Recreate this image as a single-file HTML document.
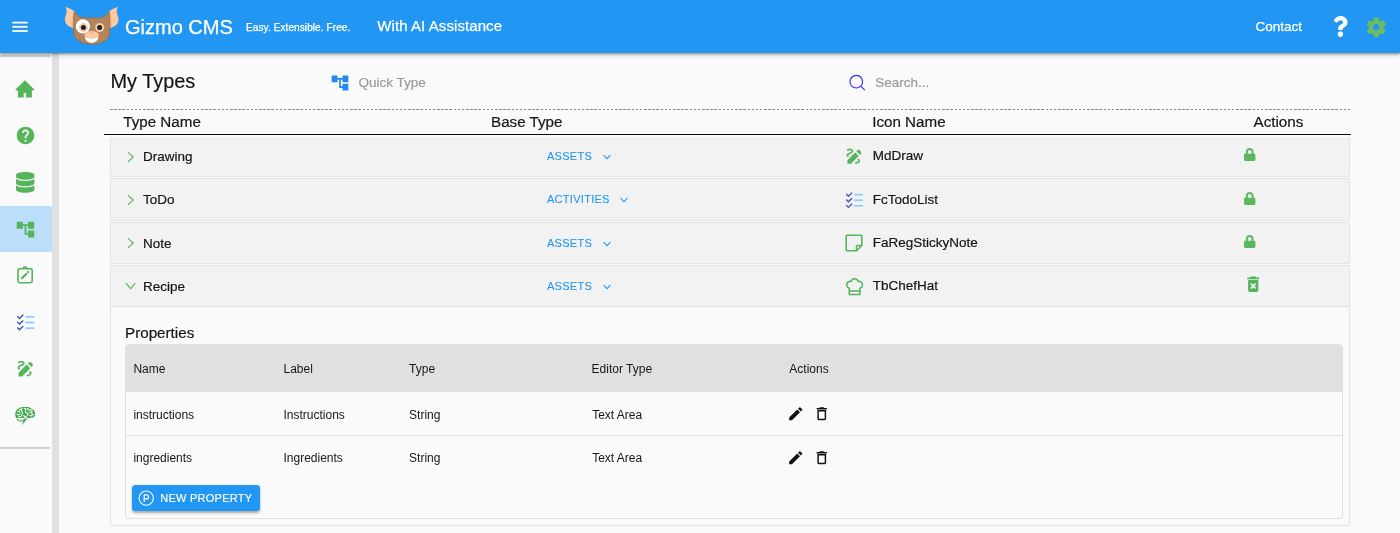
<!DOCTYPE html>
<html>
<head>
<meta charset="utf-8">
<title>Gizmo CMS</title>
<style>
*{box-sizing:border-box;margin:0;padding:0}
html,body{width:1400px;height:533px;overflow:hidden;background:#fafafa;font-family:"Liberation Sans",sans-serif;color:#161616}
#wrap{position:absolute;left:0;top:0;width:1400px;height:533px;overflow:hidden;will-change:transform}
.abs{position:absolute}
svg{position:absolute;overflow:visible}
.t{position:absolute;white-space:nowrap;line-height:1;-webkit-text-stroke:0.2px currentColor}
.w{-webkit-text-stroke:0.25px currentColor}
#hdr{position:absolute;left:0;top:0;width:1400px;height:53.1px;background:#2196f3;box-shadow:0 1px 2px rgba(0,0,0,.32),0 2px 5px rgba(0,0,0,.22);z-index:5}
#hdr .t{color:#fff;-webkit-text-stroke:0.25px #fff}
#side{position:absolute;left:0;top:52px;width:52px;height:481px;background:#fafafa}
#strip{position:absolute;left:52px;top:52px;width:7px;height:481px;background:#e0e0e0}
.row{position:absolute;left:110.1px;width:1239.9px;height:42.25px;background:#f2f2f2;border:1.4px solid #e3e3e3;border-radius:1.2px}
</style>
</head>
<body>
<div id="wrap">

<div id="side">
<div class="abs" style="left:0;top:3.2px;width:50px;height:2px;background:#d4d4d4"></div>
<div class="abs" style="left:0;top:153.7px;width:52px;height:46.2px;background:#bbdefb;border-radius:0 2.5px 2.5px 0"></div>
<div class="abs" style="left:0;top:394.9px;width:50px;height:2.6px;background:linear-gradient(#c9c9c9,#dcdcdc)"></div>
</div><div id="strip"></div>
<svg style="left:0;top:0" width="60" height="533" viewBox="0 0 60 533"><path fill="#56b45a" d="M24.9 80.3 L34.3 89.5 Q34.5 90.5 33.6 90.5 L31.9 90.5 L31.9 97.4 L26.1 97.4 L26.1 93 L23.7 93 L23.7 97.4 L17.9 97.4 L17.9 90.5 L16.2 90.5 Q15.3 90.5 15.5 89.5 Z"/></svg>
<svg style="left:14.6px;top:125.3px" width="21" height="21" viewBox="0 0 24 24"><path fill="#56b45a" d="M12 2C6.48 2 2 6.48 2 12s4.48 10 10 10 10-4.48 10-10S17.52 2 12 2zm1 17h-2v-2h2v2zm2.07-7.75l-.9.92C13.45 12.9 13 13.5 13 15h-2v-.5c0-1.1.45-2.1 1.17-2.83l1.24-1.26c.37-.36.59-.86.59-1.41 0-1.1-.9-2-2-2s-2 .9-2 2H8c0-2.21 1.79-4 4-4s4 1.79 4 4c0 .88-.36 1.68-.93 2.250z"/></svg>
<svg style="left:15.8px;top:171.9px" width="18.4" height="20.7" viewBox="0 0 448 512" preserveAspectRatio="none"><path fill="#56b45a" d="M448 73.143v45.714C448 159.143 347.667 192 224 192S0 159.143 0 118.857V73.143C0 32.857 100.333 0 224 0s224 32.857 224 73.143zM448 176v102.857C448 319.143 347.667 352 224 352S0 319.143 0 278.857V176c48.125 33.143 136.208 48.572 224 48.572S399.874 209.143 448 176zm0 160v102.857C448 479.143 347.667 512 224 512S0 479.143 0 438.857V336c48.125 33.143 136.208 48.572 224 48.572S399.874 369.143 448 336z"/></svg>
<svg style="left:14.55px;top:218.5px" width="21" height="21" viewBox="0 0 24 24"><path fill="#56b45a" d="M22 11V3h-7v3H9V3H2v8h7V8h2v10h4v3h7v-8h-7v3h-2V8h2v3z"/></svg>
<svg style="left:0;top:0" width="60" height="533" viewBox="0 0 60 533"><g fill="none" stroke="#56b45a" stroke-width="1.6" stroke-linejoin="round">
<rect x="18" y="268.7" width="14.2" height="14" rx="1.6"/>
<path d="M23.3 268.5 a1.8 1.8 0 0 1 3.6 0"/></g>
<path fill="#56b45a" d="M20.9 279.3 l0.3 -1.9 l4.9 -4.9 l1.6 1.6 l-4.9 4.9 z M26.7 271.9 l0.9 -0.9 q0.4 -0.3 0.8 0 l0.8 0.8 q0.3 0.4 0 0.8 l-0.9 0.9 z"/></svg>
<svg style="left:14.75px;top:311.5px" width="21" height="21" viewBox="0 0 48 48"><g fill="#3F51B5"><polygon points="17.8,18.1 10.4,25.4 6.2,21.3 4,23.5 10.4,29.9 20,20.3"/><polygon points="17.8,5.1 10.4,12.4 6.2,8.3 4,10.5 10.4,16.9 20,7.3"/><polygon points="17.8,31.1 10.4,38.4 6.2,34.3 4,36.5 10.4,42.9 20,33.3"/></g><g fill="#90CAF9"><rect x="24" y="22" width="20" height="4"/><rect x="24" y="9" width="20" height="4"/><rect x="24" y="35" width="20" height="4"/></g></svg>
<svg style="left:14.6px;top:357.8px" width="21" height="21" viewBox="0 0 24 24"><path fill="#56b45a" d="M18.85 10.39l1.06-1.06c.78-.78.78-2.05 0-2.83L18.5 5.09c-.78-.78-2.05-.78-2.83 0l-1.06 1.06 4.24 4.24zm-5.66-2.83L4 16.76V21h4.24l9.19-9.19-4.24-4.25zM19 17.5c0 2.19-2.54 3.5-5 3.5-.55 0-1-.45-1-1s.45-1 1-1c1.54 0 3-.73 3-1.5 0-.47-.48-.87-1.23-1.2l1.48-1.48c1.07.63 1.75 1.47 1.75 2.680zM4.58 13.35C3.61 12.79 3 12.06 3 11c0-1.8 1.89-2.63 3.56-3.36C7.59 7.18 9 6.560 9 6c0-.41-.78-1-2-1-1.260 0-1.800.61-1.830.64-.35.41-.98.46-1.400.12-.41-.34-.49-.95-.15-1.380C3.730 4.240 4.760 3 7 3s4 1.320 4 3c0 1.870-1.930 2.720-3.640 3.470C6.420 9.880 5 10.500 5 11c0 .31.430.6 1.070.86l-1.490 1.490z"/></svg>
<svg style="left:0;top:0" width="60" height="533" viewBox="0 0 60 533">
<path fill="#3fa649" d="M15.300 414.800 C15 411.500 16.800 409.300 18.600 408.500 C20.300 407.200 22.500 406.800 24.600 406.900 C27 406.600 29.600 407.400 31.400 408.700 C33.600 409.700 35.200 411.600 35.100 413.800 C35.200 415.600 34.600 416.800 33.400 417.300 C31.500 418.300 29.300 417.600 27.300 418.300 C25.800 420.500 23.800 423.300 22 425.300 C22.200 423.800 22.900 422.200 23.400 420.900 C21.600 421.700 19.600 421.700 18.200 421 C17.200 420.500 16.700 419.700 16.900 418.900 C15.900 418 15.300 416.500 15.300 414.800 Z"/>
<g fill="none" stroke="#fafafa" stroke-width="1.2" stroke-linecap="round" opacity="0.95">
<path d="M17.700 411.800 c0.800 -0.700 1.700 -0.600 2.200 0.200"/>
<path d="M22.200 408.400 c-1 1 -1.100 2.300 -0.300 3.200 c0.900 1 0.800 2.100 0 2.800"/>
<path d="M19.300 409.700 c0.800 -0.500 1.500 -0.400 1.900 0.200"/>
<path d="M24.400 408.300 c1.200 0.200 1.700 1.100 1.300 2.200 c-0.500 1.400 0.200 2.400 1.300 2.600 c1 0.200 1.300 1.300 0.700 2.200"/>
<path d="M27.200 408.600 c1.200 0.300 1.800 1 1.700 2"/>
<path d="M30 409.700 c1.300 0.300 2.100 1.100 2.200 2.200"/>
<path d="M29.600 412.600 c0.900 -0.500 1.900 -0.200 2.200 0.700 c0.300 1 1 1.600 1.800 1.400"/>
<path d="M30 415.300 c0.600 0.600 1.300 0.700 1.900 0.300"/>
<path d="M16.900 414.300 c1.200 0.700 2.500 0.500 3.200 -0.400"/>
<path d="M18.800 416.600 c1.200 0.300 2.300 -0.100 2.900 -1"/>
<path d="M23.800 415.500 c0.500 0.900 1.400 1.200 2.300 0.800"/>
<path d="M17.300 418.400 c3 0.500 6.400 0.200 9.600 -0.700"/>
<path d="M18.600 420 c1.600 0.200 3.300 -0.100 4.700 -0.800"/>
</g></svg>
<div id="hdr">
<svg style="left:0;top:0" width="140" height="53" viewBox="0 0 140 53">
<g fill="#fff"><rect x="12.300" y="21.700" width="15.400" height="1.800"/><rect x="12.300" y="25.900" width="15.400" height="1.800"/><rect x="12.300" y="30.100" width="15.400" height="1.800"/></g>
<g>
<path fill="#fcc9a3" d="M65.400 7.100 C70 8 74 10.500 76 13.500 L76 28 C72 28.300 68 26.500 66 23.500 C64.500 21 64.500 18 66 15 C67 12.500 67 9.500 65.400 7.100 Z"/>
<path fill="#fcc9a3" d="M118 7.100 C113.400 8 109.400 10.500 107.400 13.500 L107.400 28 C111.400 28.300 115.400 26.500 117.400 23.500 C118.900 21 118.900 18 117.400 15 C116.400 12.500 116.400 9.500 118 7.100 Z"/>
<path fill="#f0b48b" d="M74.200 12 L74.200 27.500 L72 27 C71 23 71.500 17 74.200 12 Z"/>
<path fill="#f0b48b" d="M109.200 12 L109.200 27.500 L111.400 27 C112.400 23 111.900 17 109.200 12 Z"/>
<path fill="#b4855c" stroke="#a06c40" stroke-width="0.9" d="M74.1 11.9 C76.5 14.5 79.5 17.2 82.7 18 L100.9 18 C104 17.2 107 14.5 109.3 11.9 C109.6 18 109.7 27 109.6 33 C109.4 39.5 102 44 91.8 44 C81.5 44 74.1 39.5 73.9 33 C73.8 27 73.9 18 74.1 11.9 Z"/>
<circle cx="82.900" cy="26.400" r="7.100" fill="#fff"/>
<circle cx="83.500" cy="27.500" r="4.400" fill="#fcc9a3"/>
<circle cx="83.4" cy="27.5" r="2.5" fill="#1c2233"/>
<circle cx="99.700" cy="27.500" r="4.500" fill="#fcc9a3"/>
<circle cx="99.6" cy="27.4" r="2.5" fill="#1c2233"/>
<path fill="#fff" d="M84.800 36.800 C85.500 40.800 88.500 42.900 91.700 42.900 C94.900 42.900 97.900 40.800 98.500 36.800 Z"/>
<ellipse cx="91.600" cy="35" rx="7.200" ry="3.900" fill="#fcc9a3"/>
<ellipse cx="91.600" cy="32.700" rx="1.600" ry="0.700" fill="#e8a882"/>
</g>
</svg>
<div class="t" style="left:125.00px;top:17.00px;font-size:20px;">Gizmo CMS</div>
<div class="t" style="left:246.00px;top:23.00px;font-size:10px;letter-spacing:0.1px;">Easy. Extensible. Free.</div>
<div class="t" style="left:377.30px;top:18.00px;font-size:15px;letter-spacing:0.08px;">With AI Assistance</div>
<div class="t" style="left:1255.50px;top:20.00px;font-size:13.5px;">Contact</div>
<svg style="left:1332.6px;top:16px" width="14.800" height="21" viewBox="0 0 384 512" preserveAspectRatio="none"><path fill="#fff" d="M202.021 0C122.202 0 70.503 32.703 29.914 91.026c-7.363 10.580-5.093 25.086 5.178 32.874l43.138 32.709c10.373 7.865 25.132 6.026 33.253-4.148 25.049-31.381 43.630-49.449 82.757-49.449 30.764 0 68.816 19.799 68.816 49.631 0 22.552-18.617 34.134-48.993 51.164-35.423 19.860-82.299 44.576-82.299 106.405V320c0 13.255 10.745 24 24 24h72.471c13.255 0 24-10.745 24-24v-5.773c0-42.860 125.268-44.645 125.268-160.627C377.504 66.256 286.902 0 202.021 0zM192 373.459c-38.196 0-69.271 31.075-69.271 69.271 0 38.195 31.075 69.270 69.271 69.270s69.271-31.075 69.271-69.271-31.075-69.270-69.271-69.270z"/></svg>
<svg style="left:1364.4px;top:14.6px" width="24.6" height="24.6" viewBox="0 0 24 24"><path fill="#6dbc62" d="M19.14 12.940c.04-.3.060-.61.060-.940 0-.32-.020-.640-.070-.940l2.030-1.580c.18-.14.230-.41.120-.61l-1.920-3.320c-.12-.22-.37-.29-.59-.22l-2.390.96c-.5-.38-1.030-.7-1.620-.94l-.36-2.540c-.04-.24-.24-.41-.48-.41h-3.840c-.24 0-.43.170-.47.410l-.36 2.540c-.59.240-1.130.570-1.620.94l-2.390-.96c-.22-.08-.47 0-.59.220L2.740 8.870c-.12.210-.08.470.12.610l2.030 1.580c-.05.300-.09.630-.09.940s.02.640.07.940l-2.030 1.580c-.18.140-.23.410-.12.610l1.920 3.320c.12.220.37.290.59.220l2.390-.96c.5.380 1.030.7 1.620.94l.36 2.540c.05.240.24.410.48.410h3.840c.24 0 .44-.17.470-.41l.36-2.540c.59-.24 1.130-.56 1.620-.94l2.390.96c.22.080.47 0 .59-.22l1.920-3.320c.12-.22.070-.47-.12-.61l-2.010-1.580zM12 15.100c-1.710 0-3.100-1.390-3.100-3.100s1.390-3.100 3.100-3.100 3.100 1.390 3.100 3.100-1.390 3.100-3.100 3.100z"/></svg>
</div>
<div class="t" style="left:110.50px;top:72.00px;font-size:19.9px;">My Types</div>
<svg style="left:330.300px;top:72.800px" width="20" height="20" viewBox="0 0 24 24"><path fill="#2389ee" d="M22 11V3h-7v3H9V3H2v8h7V8h2v10h4v3h7v-8h-7v3h-2V8h2v3z"/></svg>
<div class="t" style="left:358.50px;top:76.00px;font-size:13.5px;color:#9a9a9a;">Quick Type</div>
<svg style="left:840px;top:66px" width="40" height="34" viewBox="840 66 40 34"><g fill="none" stroke="#3030ff" stroke-width="1.15"><circle cx="856.3" cy="81.7" r="6.3"/><path d="M860.8 86.2 L864.8 90.1"/></g></svg>
<div class="t" style="left:875.20px;top:76.00px;font-size:13.5px;color:#9a9a9a;">Search...</div>
<div class="abs" style="left:110.200px;top:109.100px;width:1240px;height:1px;background:repeating-linear-gradient(90deg,#8c8c8c 0,#8c8c8c 2.500px,transparent 2.500px,transparent 4.140px)"></div>
<div class="t" style="left:123.20px;top:114.00px;font-size:15.2px;">Type Name</div>
<div class="t" style="left:491.00px;top:114.00px;font-size:15.2px;">Base Type</div>
<div class="t" style="left:872.20px;top:114.00px;font-size:15.2px;">Icon Name</div>
<div class="t" style="left:1253.50px;top:114.00px;font-size:15.2px;">Actions</div>
<div class="abs" style="left:110.1px;top:300px;width:1239.9px;height:226.4px;border:1.3px solid #e3e3e3;border-top:none;background:#fafafa;border-radius:0 0 2px 2px"></div>
<div class="row" style="top:135.15px"></div>
<svg style="left:120px;top:146.50px" width="20" height="20" viewBox="0 0 20 20"><path fill="none" stroke="#56b45a" stroke-width="1.150" d="M8 5.400 L13.200 10.100 L8 14.800"/></svg>
<div class="t" style="left:143.00px;top:150.00px;font-size:13.5px;">Drawing</div>
<div class="t" style="left:547.00px;top:151.00px;font-size:11px;color:#2196f3;letter-spacing:0.28px;-webkit-text-stroke:0.08px #2196f3;">ASSETS</div>
<svg style="left:601.60px;top:152.00px" width="10" height="10" viewBox="0 0 10 10"><path fill="none" stroke="#2196f3" stroke-width="1.100" d="M1.600 3.200 L5 6.600 L8.400 3.200"/></svg>
<svg style="left:844.3px;top:146.20px" width="20.300" height="20.300" viewBox="0 0 24 24"><path fill="#56b45a" d="M18.85 10.39l1.06-1.06c.78-.78.78-2.05 0-2.83L18.5 5.09c-.78-.78-2.05-.78-2.83 0l-1.06 1.06 4.24 4.24zm-5.66-2.83L4 16.76V21h4.24l9.19-9.19-4.24-4.25zM19 17.5c0 2.19-2.54 3.5-5 3.5-.55 0-1-.45-1-1s.45-1 1-1c1.54 0 3-.73 3-1.5 0-.47-.48-.87-1.23-1.2l1.48-1.48c1.07.63 1.75 1.47 1.75 2.680zM4.58 13.35C3.61 12.79 3 12.06 3 11c0-1.8 1.89-2.63 3.56-3.36C7.59 7.18 9 6.560 9 6c0-.41-.78-1-2-1-1.260 0-1.800.61-1.830.64-.35.41-.98.46-1.400.12-.41-.34-.49-.95-.15-1.380C3.730 4.240 4.760 3 7 3s4 1.320 4 3c0 1.870-1.930 2.720-3.640 3.470C6.420 9.880 5 10.500 5 11c0 .31.430.6 1.070.86l-1.490 1.490z"/></svg>
<div class="t" style="left:872.80px;top:149.00px;font-size:13.5px;">MdDraw</div>
<svg style="left:1243.800px;top:148.40px" width="11.400" height="12.900" viewBox="0 0 448 512" preserveAspectRatio="none"><path fill="#5cb860" d="M400 224h-24v-72C376 68.200 307.800 0 224 0S72 68.200 72 152v72H48c-26.500 0-48 21.500-48 48v192c0 26.500 21.500 48 48 48h352c26.500 0 48-21.500 48-48V272c0-26.500-21.500-48-48-48zm-104 0H152v-72c0-39.700 32.300-72 72-72s72 32.300 72 72v72z"/></svg>
<div class="row" style="top:178.48px"></div>
<svg style="left:120px;top:189.83px" width="20" height="20" viewBox="0 0 20 20"><path fill="none" stroke="#56b45a" stroke-width="1.150" d="M8 5.400 L13.200 10.100 L8 14.800"/></svg>
<div class="t" style="left:143.00px;top:193.00px;font-size:13.5px;">ToDo</div>
<div class="t" style="left:547.00px;top:194.00px;font-size:11px;color:#2196f3;letter-spacing:0.28px;-webkit-text-stroke:0.08px #2196f3;">ACTIVITIES</div>
<svg style="left:618.80px;top:195.33px" width="10" height="10" viewBox="0 0 10 10"><path fill="none" stroke="#2196f3" stroke-width="1.100" d="M1.600 3.200 L5 6.600 L8.400 3.200"/></svg>
<svg style="left:843.9px;top:190.23px" width="20.5" height="20.500" viewBox="0 0 48 48"><g fill="#3F51B5"><polygon points="17.8,18.1 10.4,25.4 6.2,21.3 4,23.5 10.4,29.9 20,20.3"/><polygon points="17.8,5.1 10.4,12.4 6.2,8.3 4,10.5 10.4,16.9 20,7.3"/><polygon points="17.8,31.1 10.4,38.4 6.2,34.3 4,36.5 10.4,42.9 20,33.3"/></g><g fill="#90CAF9"><rect x="24" y="22" width="20" height="4"/><rect x="24" y="9" width="20" height="4"/><rect x="24" y="35" width="20" height="4"/></g></svg>
<div class="t" style="left:872.80px;top:193.00px;font-size:13.5px;">FcTodoList</div>
<svg style="left:1243.800px;top:191.73px" width="11.400" height="12.900" viewBox="0 0 448 512" preserveAspectRatio="none"><path fill="#5cb860" d="M400 224h-24v-72C376 68.200 307.800 0 224 0S72 68.200 72 152v72H48c-26.500 0-48 21.500-48 48v192c0 26.500 21.500 48 48 48h352c26.500 0 48-21.500 48-48V272c0-26.500-21.500-48-48-48zm-104 0H152v-72c0-39.700 32.300-72 72-72s72 32.300 72 72v72z"/></svg>
<div class="row" style="top:221.81px"></div>
<svg style="left:120px;top:233.16px" width="20" height="20" viewBox="0 0 20 20"><path fill="none" stroke="#56b45a" stroke-width="1.150" d="M8 5.400 L13.200 10.100 L8 14.800"/></svg>
<div class="t" style="left:143.00px;top:237.00px;font-size:13.5px;">Note</div>
<div class="t" style="left:547.00px;top:238.00px;font-size:11px;color:#2196f3;letter-spacing:0.28px;-webkit-text-stroke:0.08px #2196f3;">ASSETS</div>
<svg style="left:601.60px;top:238.66px" width="10" height="10" viewBox="0 0 10 10"><path fill="none" stroke="#2196f3" stroke-width="1.100" d="M1.600 3.200 L5 6.600 L8.400 3.200"/></svg>
<svg style="left:845.1px;top:234.16px" width="18" height="18" viewBox="0 0 18 18"><path fill="none" stroke="#56b45a" stroke-width="1.600" stroke-linejoin="round" d="M2.300 1.200 H15.700 Q16.800 1.200 16.800 2.300 V11.500 L11.500 16.800 H2.300 Q1.200 16.800 1.200 15.700 V2.300 Q1.200 1.200 2.300 1.200 Z M11.500 16.800 V12.600 Q11.500 11.500 12.600 11.500 H16.800"/></svg>
<div class="t" style="left:872.80px;top:236.00px;font-size:13.5px;">FaRegStickyNote</div>
<svg style="left:1243.800px;top:235.06px" width="11.400" height="12.900" viewBox="0 0 448 512" preserveAspectRatio="none"><path fill="#5cb860" d="M400 224h-24v-72C376 68.200 307.800 0 224 0S72 68.200 72 152v72H48c-26.500 0-48 21.500-48 48v192c0 26.500 21.500 48 48 48h352c26.500 0 48-21.500 48-48V272c0-26.500-21.500-48-48-48zm-104 0H152v-72c0-39.700 32.300-72 72-72s72 32.300 72 72v72z"/></svg>
<div class="row" style="top:265.14px"></div>
<svg style="left:120px;top:276.49px" width="20" height="20" viewBox="0 0 20 20"><path fill="none" stroke="#56b45a" stroke-width="1.150" d="M6 7.200 L10.650 12.600 L15.300 7.200"/></svg>
<div class="t" style="left:143.00px;top:280.00px;font-size:13.5px;">Recipe</div>
<div class="t" style="left:547.00px;top:281.00px;font-size:11px;color:#2196f3;letter-spacing:0.28px;-webkit-text-stroke:0.08px #2196f3;">ASSETS</div>
<svg style="left:601.60px;top:281.99px" width="10" height="10" viewBox="0 0 10 10"><path fill="none" stroke="#2196f3" stroke-width="1.100" d="M1.600 3.200 L5 6.600 L8.400 3.200"/></svg>
<svg style="left:843.8px;top:276.39px" width="21.2" height="21.2" viewBox="0 0 24 24"><g fill="none" stroke="#56b45a" stroke-width="1.700" stroke-linecap="round" stroke-linejoin="round"><path d="M12 3c1.918 0 3.520 1.350 3.910 3.151a4 4 0 0 1 2.090 7.723l0 7.126h-12v-7.126a4 4 0 1 1 2.092 -7.723a4 4 0 0 1 3.908 -3.151z"/><path d="M6.161 17.009l11.839 -.009"/></g></svg>
<div class="t" style="left:872.80px;top:279.00px;font-size:13.5px;">TbChefHat</div>
<svg style="left:1242.700px;top:273.89px" width="20.500" height="20.500" viewBox="0 0 24 24"><path fill="#56b45a" d="M6 19c0 1.100.9 2 2 2h8c1.100 0 2-.9 2-2V7H6v12zm2.460-7.120l1.410-1.410L12 12.590l2.120-2.120 1.410 1.410L13.410 14l2.120 2.120-1.410 1.410L12 15.410l-2.120 2.120-1.410-1.410L10.590 14l-2.130-2.120zM15.500 4l-1-1h-5l-1 1H5v2h14V4z"/></svg>
<div class="abs" style="left:111.4px;top:306.1px;width:1237.3px;height:1.4px;background:#e1e1e1"></div>
<div class="abs" style="left:103.8px;top:132.6px;width:1246.8px;height:4.2px;background:#fdfdfd"></div>
<div class="abs" style="left:103.8px;top:133.8px;width:1246.8px;height:1.35px;background:#0a0a0a"></div>
<div class="t" style="left:125.00px;top:325.00px;font-size:15.2px;">Properties</div>
<div class="abs" style="left:124.6px;top:344.1px;width:1218.2px;height:174.8px;border:1px solid #e0e0e0;border-radius:4px;background:#fafafa;overflow:hidden"><div class="abs" style="left:-1px;top:-1px;width:1219px;height:47.5px;background:#e0e0e0"></div></div>
<div class="abs" style="left:125.600px;top:434.900px;width:1216.200px;height:1px;background:#e0e0e0"></div>
<div class="t" style="left:133.40px;top:363.00px;font-size:12px;-webkit-text-stroke:0;">Name</div>
<div class="t" style="left:283.50px;top:363.00px;font-size:12px;-webkit-text-stroke:0;">Label</div>
<div class="t" style="left:409.10px;top:363.00px;font-size:12px;-webkit-text-stroke:0;">Type</div>
<div class="t" style="left:591.60px;top:363.00px;font-size:12px;-webkit-text-stroke:0;">Editor Type</div>
<div class="t" style="left:789.30px;top:363.00px;font-size:12px;-webkit-text-stroke:0;">Actions</div>
<div class="t" style="left:133.40px;top:409.00px;font-size:12px;-webkit-text-stroke:0;">instructions</div>
<div class="t" style="left:283.50px;top:409.00px;font-size:12px;-webkit-text-stroke:0;">Instructions</div>
<div class="t" style="left:409.10px;top:409.00px;font-size:12px;-webkit-text-stroke:0;">String</div>
<div class="t" style="left:592.20px;top:409.00px;font-size:12px;-webkit-text-stroke:0;">Text Area</div>
<div class="t" style="left:133.40px;top:452.00px;font-size:12px;-webkit-text-stroke:0;">ingredients</div>
<div class="t" style="left:283.50px;top:452.00px;font-size:12px;-webkit-text-stroke:0;">Ingredients</div>
<div class="t" style="left:409.10px;top:452.00px;font-size:12px;-webkit-text-stroke:0;">String</div>
<div class="t" style="left:592.20px;top:452.00px;font-size:12px;-webkit-text-stroke:0;">Text Area</div>
<svg style="left:786.600px;top:405.25px" width="17.500" height="17.500" viewBox="0 0 24 24"><path fill="#111" d="M3 17.250V21h3.750L17.810 9.940l-3.750-3.750L3 17.250zM20.710 7.040c.39-.39.39-1.020 0-1.410l-2.340-2.340c-.39-.39-1.020-.39-1.410 0l-1.830 1.830 3.750 3.750 1.830-1.830z"/></svg>
<svg style="left:813.350px;top:405.25px" width="17.500" height="17.500" viewBox="0 0 24 24"><path fill="#111" d="M6 19c0 1.100.9 2 2 2h8c1.100 0 2-.9 2-2V7H6v12zM8 9h8v10H8V9zm7.500-5l-1-1h-5l-1 1H5v2h14V4z"/></svg>
<svg style="left:786.600px;top:448.55px" width="17.500" height="17.500" viewBox="0 0 24 24"><path fill="#111" d="M3 17.250V21h3.750L17.810 9.940l-3.750-3.750L3 17.250zM20.710 7.040c.39-.39.39-1.020 0-1.410l-2.340-2.340c-.39-.39-1.020-.39-1.410 0l-1.830 1.830 3.750 3.750 1.830-1.830z"/></svg>
<svg style="left:813.350px;top:448.55px" width="17.500" height="17.500" viewBox="0 0 24 24"><path fill="#111" d="M6 19c0 1.100.9 2 2 2h8c1.100 0 2-.9 2-2V7H6v12zM8 9h8v10H8V9zm7.500-5l-1-1h-5l-1 1H5v2h14V4z"/></svg>
<div class="abs" style="left:132.300px;top:485px;width:127.500px;height:25.700px;background:#2196f3;border-radius:3.500px;box-shadow:0 1.500px 2.500px rgba(0,0,0,.32)"></div>
<svg style="left:136px;top:488px" width="20" height="20" viewBox="136 488 20 20"><circle cx="146.200" cy="498.100" r="7.150" fill="none" stroke="#fff" stroke-width="1.150"/><path fill="none" stroke="#fff" stroke-width="1.250" d="M144.2 501.9 V494.9 H146.5 a2.0 2.0 0 0 1 0 4.0 H144.2"/></svg>
<div class="t" style="left:160.20px;top:493.00px;font-size:11px;color:#fff;letter-spacing:0.26px;-webkit-text-stroke:0.15px #fff;">NEW PROPERTY</div>
</div></body></html>
